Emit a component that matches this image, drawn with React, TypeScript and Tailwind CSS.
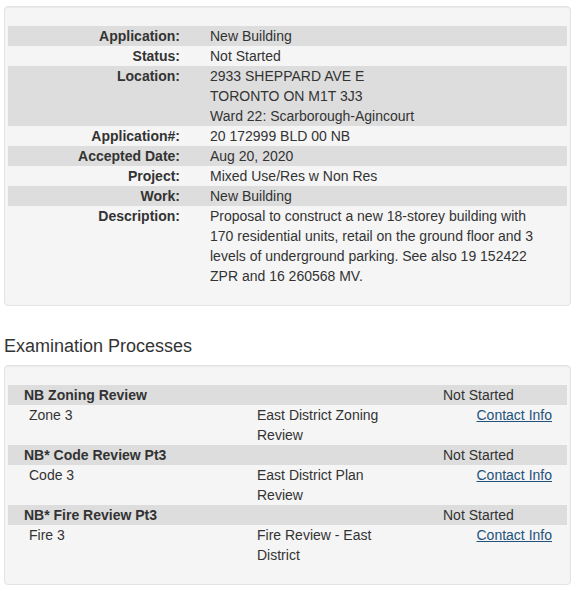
import React from "react";

const details: { label: string; lines: string[] }[] = [
  { label: "Application:", lines: ["New Building"] },
  { label: "Status:", lines: ["Not Started"] },
  {
    label: "Location:",
    lines: ["2933 SHEPPARD AVE E", "TORONTO ON M1T 3J3", "Ward 22: Scarborough-Agincourt"],
  },
  { label: "Application#:", lines: ["20 172999 BLD 00 NB"] },
  { label: "Accepted Date:", lines: ["Aug 20, 2020"] },
  { label: "Project:", lines: ["Mixed Use/Res w Non Res"] },
  { label: "Work:", lines: ["New Building"] },
  {
    label: "Description:",
    lines: [
      "Proposal to construct a new 18-storey building with 170 residential units, retail on the ground floor and 3 levels of underground parking. See also 19 152422 ZPR and 16 260568 MV.",
    ],
  },
];

const processes = [
  { title: "NB Zoning Review", status: "Not Started", name: "Zone 3", group: "East District Zoning Review" },
  { title: "NB* Code Review Pt3", status: "Not Started", name: "Code 3", group: "East District Plan Review" },
  { title: "NB* Fire Review Pt3", status: "Not Started", name: "Fire 3", group: "Fire Review - East District" },
];

export default function App() {
  return (
    <div
      className="w-[576px] min-h-[591px] bg-white pt-[6px] pl-[4px] pr-[5px] text-[14px] leading-[20px] text-[#333333]"
      style={{ fontFamily: '"Liberation Sans", Arial, Helvetica, sans-serif' }}
    >
      <div className="rounded-[4px] border border-[#e3e3e3] bg-[#f5f5f5] px-[3px] py-[19px] shadow-[inset_0_1px_1px_rgba(0,0,0,0.05)]">
        {details.map((d, i) => (
          <div key={d.label} className={`flex ${i % 2 === 0 ? "bg-[#dddddd]" : ""}`}>
            <div className="w-[172px] shrink-0 text-right font-bold">{d.label}</div>
            <div className="flex-1 pl-[30px] pr-[19px]">
              {d.lines.map((l) => (
                <div key={l}>{l}</div>
              ))}
            </div>
          </div>
        ))}
      </div>

      <h4 className="mt-[30px] mb-[9px] text-[18px] leading-[20px] font-normal text-[#333333]">
        Examination Processes
      </h4>

      <div className="rounded-[4px] border border-[#e3e3e3] bg-[#f5f5f5] px-[3px] py-[19px] shadow-[inset_0_1px_1px_rgba(0,0,0,0.05)]">
        {processes.map((p) => (
          <div key={p.title}>
            <div className="flex bg-[#dddddd]">
              <div className="w-[389px] shrink-0 pl-[16px] font-bold">{p.title}</div>
              <div className="flex-1 pl-[46px]">{p.status}</div>
            </div>
            <div className="flex">
              <div className="w-[249px] shrink-0 pl-[21px]">{p.name}</div>
              <div className="w-[140px] shrink-0">{p.group}</div>
              <div className="flex-1 pr-[15px] text-right">
                <a href="#" className="text-[#23527c] underline">
                  Contact Info
                </a>
              </div>
            </div>
          </div>
        ))}
      </div>
    </div>
  );
}
